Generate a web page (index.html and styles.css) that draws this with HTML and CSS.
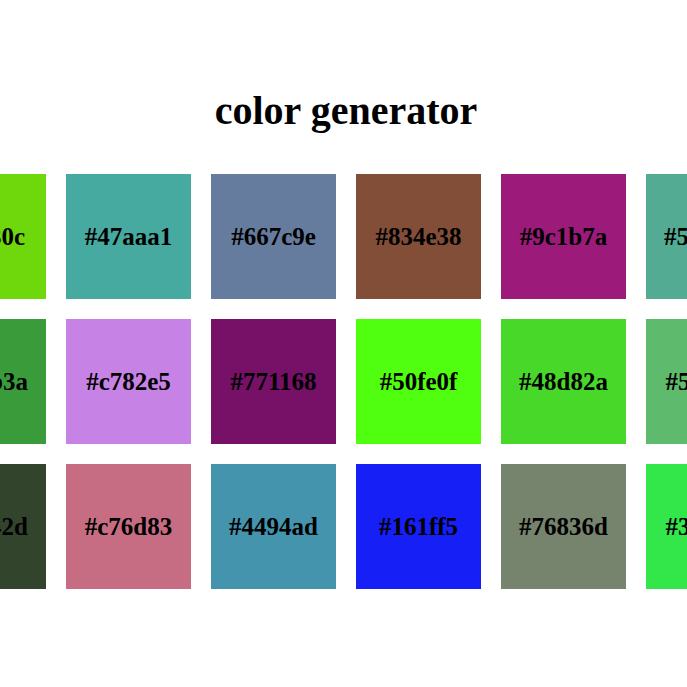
FILE: index.html
```html
<!DOCTYPE html>
<html>
<head>
<meta charset="utf-8">
<link rel="stylesheet" href="styles.css">
</head>
<body>
<h1 class="title">color generator</h1>
<div class="grid">
  <div class="row">
    <div class="swatch" style="background:#6fd80c">#6fd30c</div>
    <div class="swatch" style="background:#47aaa1">#47aaa1</div>
    <div class="swatch" style="background:#667c9e">#667c9e</div>
    <div class="swatch" style="background:#834e38">#834e38</div>
    <div class="swatch" style="background:#9c1b7a">#9c1b7a</div>
    <div class="swatch" style="background:#52ab92">#52ab92</div>
  </div>
  <div class="row">
    <div class="swatch" style="background:#3a9b3a">#3a9b3a</div>
    <div class="swatch" style="background:#c782e5">#c782e5</div>
    <div class="swatch" style="background:#771168">#771168</div>
    <div class="swatch" style="background:#50fe0f">#50fe0f</div>
    <div class="swatch" style="background:#48d82a">#48d82a</div>
    <div class="swatch" style="background:#5eba6c">#5eba6c</div>
  </div>
  <div class="row">
    <div class="swatch" style="background:#33442d">#33442d</div>
    <div class="swatch" style="background:#c76d83">#c76d83</div>
    <div class="swatch" style="background:#4494ad">#4494ad</div>
    <div class="swatch" style="background:#161ff5">#161ff5</div>
    <div class="swatch" style="background:#76836d">#76836d</div>
    <div class="swatch" style="background:#33e64a">#33e64a</div>
  </div>
</div>
</body>
</html>
```
FILE: styles.css
```css
html, body {
  margin: 0;
  padding: 0;
  background: #fff;
  overflow: hidden;
}
body {
  padding-left: 5px;
  font-family: "Liberation Serif", "Times New Roman", serif;
  color: #000;
}
.title {
  margin: 0;
  padding-top: 88px;
  height: 86px;
  box-sizing: content-box;
  font-size: 40px;
  line-height: 46px;
  font-weight: bold;
  text-align: center;
}
.grid {
  display: flex;
  flex-direction: column;
  gap: 20px;
}
.row {
  display: flex;
  justify-content: center;
  gap: 20px;
}
.swatch {
  flex: 0 0 125px;
  width: 125px;
  height: 125px;
  display: flex;
  align-items: center;
  justify-content: center;
  font-size: 25px;
  font-weight: bold;
}
```
